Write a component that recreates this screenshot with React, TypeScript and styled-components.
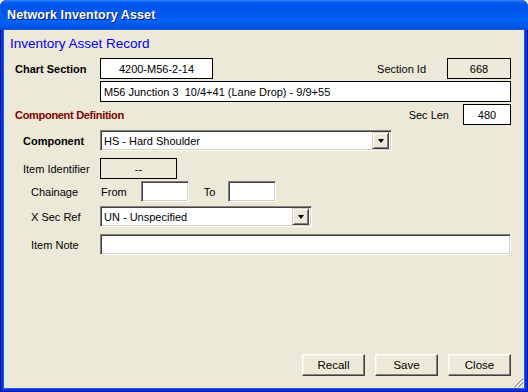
import styled, { createGlobalStyle } from 'styled-components'

const Global = createGlobalStyle`
  html, body {
    margin: 0;
    padding: 0;
    background: #ffffff;
  }
  * {
    box-sizing: border-box;
  }
`;

const Frame = styled.div`
  width: 528px;
  height: 392px;
  display: flex;
  flex-direction: column;
  background: #0831d9;
  border-radius: 7px 7px 0 0;
  box-shadow: inset 1px 0 #0019b0, inset -1px 0 #0019b0, inset 0 -1px #0019b0;
  font-family: "Liberation Sans", Arial, sans-serif;
  font-size: 11px;
  color: #000;
`;

const TitleBar = styled.div`
  height: 30px;
  flex: none;
  display: flex;
  align-items: center;
  padding: 0 0 1px 7px;
  border-radius: 7px 7px 0 0;
  background: linear-gradient(180deg, #3d8eff 0px, #0a5ef5 2px, #0055ea 5px, #0057ed 12px, #0062f8 21px, #0058ee 26px, #0046d8 29px, #003ccc 30px);
  color: #fff;
  font-weight: bold;
  font-size: 12.5px;
  text-shadow: 1px 1px #0a1883;
  letter-spacing: 0.1px;
`;

const Client = styled.div`
  position: relative;
  flex: 1;
  margin: 0 4px 4px 4px;
  background: #ece9d8;
  box-shadow: 0 0 0 1px #1660ea;
  display: flex;
  flex-direction: column;
  padding: 0 13px 0 0;
`;

const Heading = styled.div`
  margin: 6px 0 0 6px;
  height: 16px;
  line-height: 16px;
  font-size: 13.5px;
  color: #0000ff;
`;

const Row = styled.div<{ $mt: number }>`
  display: flex;
  align-items: center;
  height: 21px;
  margin-top: ${p => p.$mt}px;
`;

const Label = styled.div<{ $indent: number; $bold?: boolean }>`
  width: 96px;
  flex: none;
  padding-left: ${p => p.$indent}px;
  font-weight: ${p => (p.$bold ? 'bold' : 'normal')};
  white-space: nowrap;
`;

const SectionTitle = styled.div`
  padding-left: 11px;
  color: #800000;
  font-weight: bold;
  letter-spacing: -0.3px;
`;

const Spacer = styled.div`
  flex: 1;
`;

const SideLabel = styled.div<{ $gap: number }>`
  margin-right: ${p => p.$gap}px;
`;

const Display = styled.div<{ $w?: number; $grey?: boolean; $left?: boolean }>`
  height: 21px;
  width: ${p => (p.$w ? `${p.$w}px` : 'auto')};
  flex: ${p => (p.$w ? 'none' : '1')};
  border: 1px solid #000;
  background: ${p => (p.$grey ? '#ece9d8' : '#fff')};
  display: flex;
  align-items: center;
  justify-content: ${p => (p.$left ? 'flex-start' : 'center')};
  padding: 0 3px;
  white-space: nowrap;
  overflow: hidden;
`;

const Edit = styled.div<{ $w?: number }>`
  height: 21px;
  width: ${p => (p.$w ? `${p.$w}px` : 'auto')};
  flex: ${p => (p.$w ? 'none' : '1')};
  background: #fff;
  border: 1px solid;
  border-color: #808080 #fff #fff #808080;
  box-shadow: inset 1px 1px 0 #404040, inset -1px -1px 0 #d4d0c8;
  display: flex;
  align-items: center;
  padding: 0 2px 0 3px;
  white-space: nowrap;
`;

const InlineLabel = styled.span<{ $ml: number; $mr: number }>`
  margin-left: ${p => p.$ml}px;
  margin-right: ${p => p.$mr}px;
`;

const DropButton = styled.div`
  margin-left: auto;
  width: 17px;
  height: 17px;
  background: #ece9d8;
  border: 1px solid;
  border-color: #d4d0c8 #404040 #404040 #d4d0c8;
  box-shadow: inset 1px 1px 0 #fff, inset -1px -1px 0 #808080;
  display: flex;
  align-items: center;
  justify-content: center;
  &::after {
    content: '';
    border-left: 3.5px solid transparent;
    border-right: 3.5px solid transparent;
    border-top: 4px solid #000;
    margin-top: 1px;
  }
`;

const Footer = styled.div`
  margin-top: auto;
  margin-bottom: 12px;
  display: flex;
  justify-content: flex-end;
  gap: 10px;
  padding-right: 0;
`;

const Button = styled.button`
  width: 63px;
  height: 22px;
  padding: 0;
  background: #ece9d8;
  border: 1px solid;
  border-color: #fff #404040 #404040 #fff;
  box-shadow: inset -1px -1px 0 #808080, inset 1px 1px 0 #f4f2ea;
  font-family: "Liberation Sans", Arial, sans-serif;
  font-size: 11.5px;
  color: #000;
`;

const Grip = styled.svg`
  position: absolute;
  right: 0;
  bottom: 0;
`;

const App = () => {
  return (
    <>
      <Global />
      <Frame>
        <TitleBar>Network Inventory Asset</TitleBar>
        <Client>
          <Heading>Inventory Asset Record</Heading>

          <Row $mt={6}>
            <Label $indent={11} $bold>Chart Section</Label>
            <Display $w={113}>4200-M56-2-14</Display>
            <Spacer />
            <SideLabel $gap={21}>Section Id</SideLabel>
            <Display $w={64} $grey>668</Display>
          </Row>

          <Row $mt={2}>
            <Label $indent={0} />
            <Display $left>M56 Junction 3&nbsp; 10/4+41 (Lane Drop) - 9/9+55</Display>
          </Row>

          <Row $mt={2}>
            <SectionTitle>Component Definition</SectionTitle>
            <Spacer />
            <SideLabel $gap={14}>Sec Len</SideLabel>
            <Display $w={48}>480</Display>
          </Row>

          <Row $mt={5}>
            <Label $indent={19} $bold>Component</Label>
            <Edit $w={292}>
              HS - Hard Shoulder
              <DropButton />
            </Edit>
          </Row>

          <Row $mt={7}>
            <Label $indent={19}>Item Identifier</Label>
            <Display $w={77} $grey>--</Display>
          </Row>

          <Row $mt={2}>
            <Label $indent={27}>Chainage</Label>
            <InlineLabel $ml={1} $mr={14}>From</InlineLabel>
            <Edit $w={48} />
            <InlineLabel $ml={15} $mr={13}>To</InlineLabel>
            <Edit $w={48} />
          </Row>

          <Row $mt={4}>
            <Label $indent={27}>X Sec Ref</Label>
            <Edit $w={212}>
              UN - Unspecified
              <DropButton />
            </Edit>
          </Row>

          <Row $mt={7}>
            <Label $indent={27}>Item Note</Label>
            <Edit />
          </Row>

          <Footer>
            <Button>Recall</Button>
            <Button>Save</Button>
            <Button>Close</Button>
          </Footer>

          <Grip width="13" height="13" viewBox="0 0 13 13">
            <path d="M12 2 L2 12 M12 6 L6 12 M12 10 L10 12" stroke="#fff" strokeWidth="1" />
            <path d="M12 3 L3 12 M12 4 L4 12 M12 7 L7 12 M12 8 L8 12 M12 11 L11 12" stroke="#a0a0a0" strokeWidth="1" />
          </Grip>
        </Client>
      </Frame>
    </>
  )
}

export default App;
